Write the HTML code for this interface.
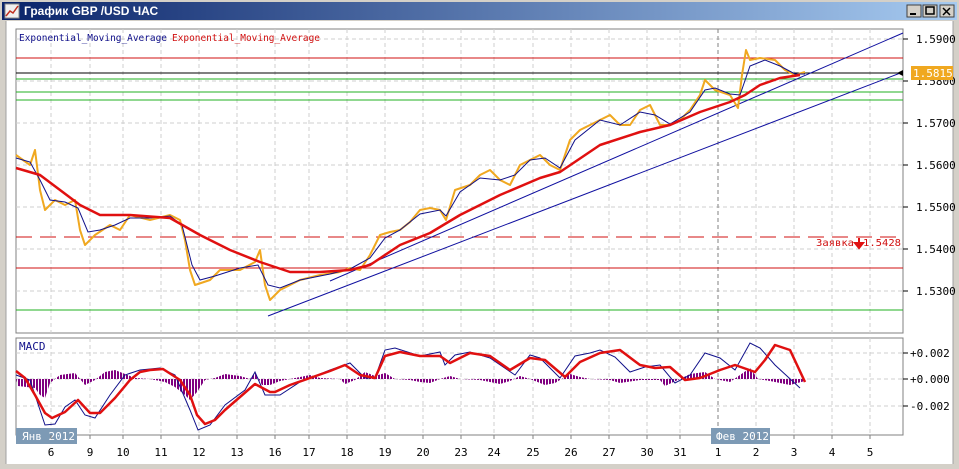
<!DOCTYPE html>
<html><head><meta charset="utf-8"><style>
html,body{margin:0;padding:0;width:959px;height:469px;overflow:hidden;background:#d4d0c8;font-family:"Liberation Sans",sans-serif}
svg text{font-family:"DejaVu Sans Mono","Liberation Mono",monospace;font-size:11px}
</style></head><body>
<svg width="959" height="469" xmlns="http://www.w3.org/2000/svg">
<defs>
<linearGradient id="tb" x1="0" x2="1"><stop offset="0" stop-color="#0a246a"/><stop offset="1" stop-color="#a6caf0"/></linearGradient>
<pattern id="hs" width="3" height="4" patternUnits="userSpaceOnUse"><rect width="2" height="4" fill="#800080"/></pattern>
</defs>
<rect width="959" height="469" fill="#d4d0c8"/>
<rect x="2" y="2" width="955" height="18" fill="url(#tb)"/>
<rect x="5" y="4" width="14" height="14" fill="#f0f0f0" stroke="#888"/>
<path d="M6 16 L10 11 L13 13 L18 6" stroke="#c03020" fill="none" stroke-width="1.5"/>
<text x="24" y="15" fill="#fff" style="font-family:'Liberation Sans',sans-serif;font-size:12px;font-weight:bold">График GBP /USD  ЧАС</text>
<g fill="#d4d0c8" stroke="#404040"><rect x="907" y="5" width="14" height="12"/><rect x="923" y="5" width="14" height="12"/><rect x="940" y="5" width="14" height="12"/></g>
<path d="M910 14h6" stroke="#000" stroke-width="2"/><rect x="926" y="7" width="8" height="7" fill="none" stroke="#000" stroke-width="1.5"/><path d="M943 8l7 7M950 8l-7 7" stroke="#000" stroke-width="1.5"/>
<rect x="6" y="21" width="947" height="443" fill="#fff"/>
<path d="M6 21v443M953 21v443" stroke="#a0a0a0"/>
<rect x="16" y="29" width="887" height="304" fill="#fff" stroke="#808080"/>
<rect x="16" y="338" width="887" height="97" fill="#fff" stroke="#808080"/>
<g stroke="#cfcfcf" stroke-dasharray="4,3">
<path d="M16 39H903M16 81H903M16 123H903M16 165H903M16 207H903M16 249H903M16 291H903M16 353H903M16 379H903M16 406H903"/>
<path d="M51 29V333M90 29V333M123 29V333M161 29V333M199 29V333M237 29V333M275 29V333M309 29V333M347 29V333M385 29V333M423 29V333M461 29V333M494 29V333M533 29V333M571 29V333M609 29V333M647 29V333M680 29V333M756 29V333M794 29V333M832 29V333M870 29V333"/>
<path d="M51 338V435M90 338V435M123 338V435M161 338V435M199 338V435M237 338V435M275 338V435M309 338V435M347 338V435M385 338V435M423 338V435M461 338V435M494 338V435M533 338V435M571 338V435M609 338V435M647 338V435M680 338V435M756 338V435M794 338V435M832 338V435M870 338V435"/>
</g>
<path d="M718 29V333M718 338V435" stroke="#808080" stroke-dasharray="4,3"/>
<g stroke-width="1">
<path d="M16 58H903M16 268H903" stroke="#d01010"/>
<path d="M16 79H903M16 92H903M16 100H903M16 310H903" stroke="#20b020"/>
<path d="M16 73H903" stroke="#000"/>
<path d="M16 237H903" stroke="#d01010" stroke-dasharray="16,8"/>
</g>
<path d="M268 316L903 72M330 281L903 33" stroke="#1010a0" stroke-width="1"/>
<polyline fill="none" stroke="#f0a820" stroke-width="2" stroke-linejoin="round" points="16,155 30,165 35,150 40,190 45,210 55,200 65,205 75,200 80,230 85,245 95,235 110,225 120,230 130,215 150,220 170,215 180,220 185,240 190,270 195,285 210,280 220,270 240,270 255,262 260,250 265,285 270,300 280,290 300,280 320,275 340,272 350,268 360,270 370,255 380,235 390,232 400,230 410,222 420,210 430,208 440,210 446,220 455,190 470,185 480,175 490,170 500,180 510,185 520,165 530,160 540,155 550,165 560,170 570,140 580,130 590,125 600,120 610,115 620,125 630,125 640,110 650,105 660,125 670,125 680,120 690,110 700,95 705,80 715,90 730,95 738,108 742,75 746,50 750,60 760,58 775,60 785,70 795,75 805,72"/>
<polyline fill="none" stroke="#10108a" stroke-width="1" points="16,158 30,162 40,180 50,200 65,202 78,208 88,232 100,230 115,225 130,218 150,218 170,216 182,225 192,265 200,280 215,276 240,268 258,265 268,285 280,288 300,280 330,274 350,269 370,258 385,238 400,230 420,214 440,210 446,216 460,192 480,178 500,180 515,175 530,160 545,158 560,168 575,140 600,120 620,125 640,112 655,115 670,124 690,112 705,90 715,88 730,94 740,95 750,66 765,60 780,66 795,74 805,74"/>
<polyline fill="none" stroke="#e01010" stroke-width="2.5" stroke-linejoin="round" points="16,168 40,175 60,190 80,205 100,215 130,215 170,218 200,235 230,250 260,262 290,272 320,272 350,270 370,265 400,245 430,233 460,215 500,195 540,178 560,172 600,145 640,132 670,125 700,112 730,102 745,95 760,85 780,78 800,75"/>
<text x="19" y="41" fill="#10108a" style="font-size:10px" textLength="148" lengthAdjust="spacingAndGlyphs">Exponential_Moving_Average</text>
<text x="172" y="41" fill="#d01010" style="font-size:10px" textLength="148" lengthAdjust="spacingAndGlyphs">Exponential_Moving_Average</text>
<text x="816" y="246" fill="#d01010" style="font-size:10px" textLength="38" lengthAdjust="spacingAndGlyphs">Заявка</text><text x="863" y="246" fill="#d01010" style="font-size:10px" textLength="38" lengthAdjust="spacingAndGlyphs">1.5428</text>
<path d="M859 238v8M855 243l4 5 4-5z" stroke="#e01010" fill="#e01010" stroke-width="2"/>
<g fill="#000">
<text x="916" y="43">1.5900</text><text x="916" y="85">1.5800</text><text x="916" y="127">1.5700</text><text x="916" y="169">1.5600</text><text x="916" y="211">1.5500</text><text x="916" y="253">1.5400</text><text x="916" y="295">1.5300</text>
<text x="910" y="357">+0.002</text><text x="910" y="383">+0.000</text><text x="910" y="410">-0.002</text>
</g>
<path d="M903 39h5M903 81h5M903 123h5M903 165h5M903 207h5M903 249h5M903 291h5M903 353h5M903 379h5M903 406h5" stroke="#000"/>
<path d="M897 73l6-3v6z" fill="#000"/>
<rect x="911" y="66" width="42" height="14" fill="#f0a820"/>
<text x="913" y="77" fill="#fff">1.5815</text>
<polygon fill="url(#hs)" points="16,379 18,386 35,388 40,395 45,398 50,383 55,379 60,375 75,373 80,379 85,385 95,380 105,372 115,370 125,374 135,378 150,379 165,382 175,387 185,395 190,400 197,392 205,380 215,378 225,374 240,376 250,379 255,372 262,385 270,385 280,381 300,377 310,375 320,378 340,379 345,384 355,380 365,372 375,376 385,373 395,379 410,380 420,382 430,383 440,379 450,376 460,379 480,380 500,384 510,381 520,376 530,379 545,385 555,383 570,374 580,377 590,379 610,380 620,383 640,380 660,380 665,386 680,379 690,374 705,372 715,379 730,382 740,375 750,368 758,379 770,381 790,385 805,381 805,379"/>
<polyline fill="none" stroke="#10108a" stroke-width="1" points="16,375 30,380 45,425 55,424 65,407 75,400 85,415 95,418 110,395 125,375 140,370 160,368 175,375 190,410 198,430 210,425 225,405 245,390 255,372 265,395 280,395 300,382 330,370 350,363 365,378 375,378 385,350 395,348 420,356 440,352 445,365 455,355 470,352 490,358 515,375 530,355 540,358 560,378 575,356 590,353 600,350 615,357 630,372 645,367 660,365 675,383 690,375 705,353 720,358 735,370 750,343 760,348 775,365 800,388"/>
<polyline fill="none" stroke="#e01010" stroke-width="2.5" stroke-linejoin="round" points="16,371 25,378 35,395 45,413 52,418 65,412 78,400 90,413 100,413 115,398 130,380 140,372 150,370 163,369 180,380 190,395 197,415 205,424 215,420 225,410 240,397 255,384 270,392 275,392 290,385 310,378 330,371 345,365 360,375 375,378 385,356 400,352 420,356 440,356 450,363 470,353 490,356 510,370 530,358 545,360 565,377 580,362 600,353 620,350 640,365 655,368 670,367 685,380 700,378 720,370 735,365 755,372 765,360 775,345 790,350 805,382"/>
<text x="19" y="350" fill="#10108a">MACD</text>
<rect x="16" y="428" width="61" height="16" fill="#7d9ab5"/><text x="22" y="440" fill="#fff">Янв 2012</text>
<rect x="711" y="428" width="59" height="16" fill="#7d9ab5"/><text x="716" y="440" fill="#fff">Фев 2012</text>
<g fill="#000" text-anchor="middle">
<text x="51" y="456">6</text><text x="90" y="456">9</text><text x="123" y="456">10</text><text x="161" y="456">11</text><text x="199" y="456">12</text><text x="237" y="456">13</text><text x="275" y="456">16</text><text x="309" y="456">17</text><text x="347" y="456">18</text><text x="385" y="456">19</text><text x="423" y="456">20</text><text x="461" y="456">23</text><text x="494" y="456">24</text><text x="533" y="456">25</text><text x="571" y="456">26</text><text x="609" y="456">27</text><text x="647" y="456">30</text><text x="680" y="456">31</text><text x="718" y="456">1</text><text x="756" y="456">2</text><text x="794" y="456">3</text><text x="832" y="456">4</text><text x="870" y="456">5</text>
</g>
<path d="M51 435v4M90 435v4M123 435v4M161 435v4M199 435v4M237 435v4M275 435v4M309 435v4M347 435v4M385 435v4M423 435v4M461 435v4M494 435v4M533 435v4M571 435v4M609 435v4M647 435v4M680 435v4M756 435v4M794 435v4M832 435v4M870 435v4" stroke="#808080"/>
</svg>
</body></html>
